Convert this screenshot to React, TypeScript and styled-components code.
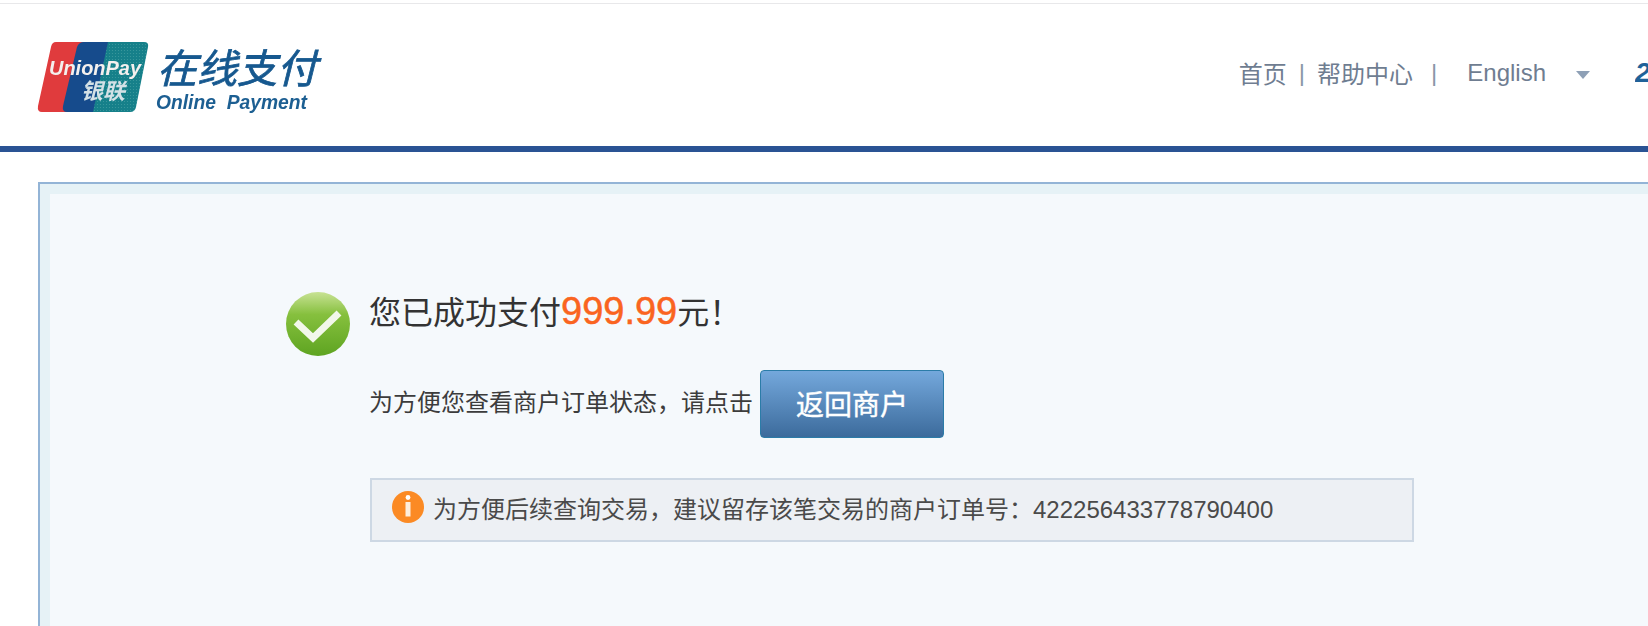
import React from 'react';
import styled, {createGlobalStyle} from 'styled-components';

const FONT = `"Liberation Sans", "Noto Sans CJK SC", sans-serif`;

const GlobalStyle = createGlobalStyle`
	html, body {
		margin: 0;
		height: 626px;
		overflow: hidden;
		background: #fff;
		font-family: ${FONT};
	}
`;

const Logo = () => (
	<svg width="290" height="80" viewBox="0 -5 290 80">
		<defs>
			<filter id="soft" x="-5%" y="-5%" width="110%" height="110%">
				<feGaussianBlur stdDeviation="0.55"/>
			</filter>
			<pattern id="dots" width="3" height="3" patternUnits="userSpaceOnUse">
				<rect width="3" height="3" fill="#14808a"/>
				<circle cx="1.5" cy="1.5" r="0.6" fill="#3f9a9e"/>
			</pattern>
		</defs>
		<g filter="url(#soft)">
			<path d="M20 2 H50 L33 72 H6 Q1 72 2 66 L15 7 Q16 2 20 2 Z" fill="#e03a3c"/>
			<path d="M48 2 H82 L65 72 H31 Q26 72 27 66 L41 7 Q43 2 48 2 Z" fill="#144c8c"/>
			<path d="M72 2 H108 Q113 2 112 7 L100 67 Q99 72 94 72 H57 Z" fill="url(#dots)"/>
			<text x="13" y="35" fontFamily={FONT} fontSize="21" fontWeight="700" fontStyle="italic" fill="#f4f0ee" textLength="92" lengthAdjust="spacingAndGlyphs">UnionPay</text>
			<text x="45" y="59" fontFamily={FONT} fontSize="22" fontWeight="700" fontStyle="italic" fill="#d3e1e6" textLength="44">银联</text>
			<text x="121" y="43" fontFamily={FONT} fontSize="40" fontStyle="italic" fill="#17598f" stroke="#17598f" strokeWidth="0.8" textLength="160">在线支付</text>
			<text x="120" y="69" fontFamily={FONT} fontSize="20" fontStyle="italic" fontWeight="700" fill="#1c5e92" textLength="151" lengthAdjust="spacingAndGlyphs" xmlSpace="preserve">Online  Payment</text>
		</g>
	</svg>
);

const SuccessIcon = () => (
	<svg width="64" height="64" viewBox="0 0 64 64">
		<defs>
			<linearGradient id="green" x1="0" y1="0" x2="0" y2="1">
				<stop offset="0" stopColor="#c8e294"/>
				<stop offset="0.35" stopColor="#86c03e"/>
				<stop offset="1" stopColor="#5ea421"/>
			</linearGradient>
		</defs>
		<circle cx="32" cy="32" r="32" fill="url(#green)"/>
		<path d="M10 30 L27 46 L53 21" fill="none" stroke="#f2f7ea" strokeWidth="7"/>
	</svg>
);

const InfoIcon = () => (
	<svg width="32" height="32" viewBox="0 0 32 32">
		<circle cx="16" cy="16" r="16" fill="#fb8a24"/>
		<circle cx="16" cy="6.5" r="2.4" fill="#fff"/>
		<rect x="13.5" y="11" width="5" height="14.5" fill="#fdeede"/>
	</svg>
);

export default function App() {
	return (
		<Page>
			<GlobalStyle/>
			<TopLine/>
			<Header>
				<Logo/>
				<Nav>
					<NavLink>首页</NavLink>
					<Sep>|</Sep>
					<NavLink>帮助中心</NavLink>
					<Sep $wide>|</Sep>
					<NavLink>English</NavLink>
					<Caret/>
					<Hotline>2</Hotline>
				</Nav>
			</Header>
			<Panel>
				<PanelInner>
					<Result>
						<SuccessIcon/>
						<Title>您已成功支付<Amount>999.99</Amount>元！</Title>
					</Result>
					<ReturnRow>
						<ReturnText>为方便您查看商户订单状态，请点击</ReturnText>
						<ReturnButton>返回商户</ReturnButton>
					</ReturnRow>
					<Notice>
						<InfoIcon/>
						<span>为方便后续查询交易，建议留存该笔交易的商户订单号：422256433778790400</span>
					</Notice>
				</PanelInner>
			</Panel>
		</Page>
	);
}

const Page = styled.div`
	width: 1648px;
	height: 626px;
	overflow: hidden;
	padding-top: 3px;
	box-sizing: border-box;
`;

const TopLine = styled.div`
	height: 1px;
	background: #e8e8ea;
`;

const Header = styled.header`
	display: flex;
	align-items: center;
	justify-content: space-between;
	height: 142px;
	padding-left: 36px;
	border-bottom: 6px solid #2a5394;
`;

const Nav = styled.nav`
	display: flex;
	align-items: center;
	font-size: 24px;
	color: #6f7d91;
	margin-top: -5px;
`;

const NavLink = styled.a`
	white-space: nowrap;
`;

const Sep = styled.span<{$wide?: boolean}>`
	margin: ${p => (p.$wide ? '0 30px 0 18px' : '0 12px')};
	color: #8a97a8;
`;

const Caret = styled.i`
	width: 0;
	height: 0;
	margin-left: 30px;
	margin-top: 4px;
	border-left: 7px solid transparent;
	border-right: 7px solid transparent;
	border-top: 8px solid #8ea0b6;
`;

const Hotline = styled.b`
	width: 13px;
	margin-left: 45px;
	overflow: hidden;
	font-size: 28px;
	font-style: italic;
	color: #1f6299;
`;

const Panel = styled.main`
	width: 1700px;
	height: 520px;
	margin: 30px 0 0 38px;
	border: 2px solid #93b4d6;
	background: #f5f9fc;
`;

const PanelInner = styled.div`
	height: 100%;
	padding: 98px 0 0 236px;
	box-sizing: border-box;
	border-top: 10px solid #e6f2f6;
	border-left: 10px solid #e6f2f6;
`;

const Result = styled.div`
	display: flex;
	align-items: flex-start;
	gap: 19px;
`;

const Title = styled.h1`
	margin: -5px 0 0;
	font-size: 32px;
	font-weight: 400;
	line-height: 48px;
	color: #333;
`;

const Amount = styled.span`
	font-size: 38px;
	-webkit-text-stroke: 0.5px #fa6420;
	color: #fa6420;
`;

const ReturnRow = styled.div`
	display: flex;
	align-items: center;
	gap: 7px;
	margin: 14px 0 0 84px;
	font-size: 24px;
	color: #3c3c3c;
`;

const ReturnText = styled.span`
	margin: -7px 0 0 -1px;
`;

const ReturnButton = styled.button`
	width: 184px;
	height: 68px;
	padding: 0 0 3px;
	border: 1px solid #2b7ca8;
	border-radius: 4px;
	background: linear-gradient(#74a8dc, #3c6b9c);
	font-family: ${FONT};
	font-size: 28px;
	-webkit-text-stroke: 0.4px #fff;
	color: #fff;
`;

const Notice = styled.div`
	display: flex;
	align-items: center;
	gap: 9px;
	width: 1044px;
	height: 64px;
	margin: 40px 0 0 84px;
	padding: 0 0 6px 20px;
	box-sizing: border-box;
	border: 2px solid #cdd8e4;
	background: #edf0f4;
	font-size: 24px;
	color: #4a4a4a;
`;
